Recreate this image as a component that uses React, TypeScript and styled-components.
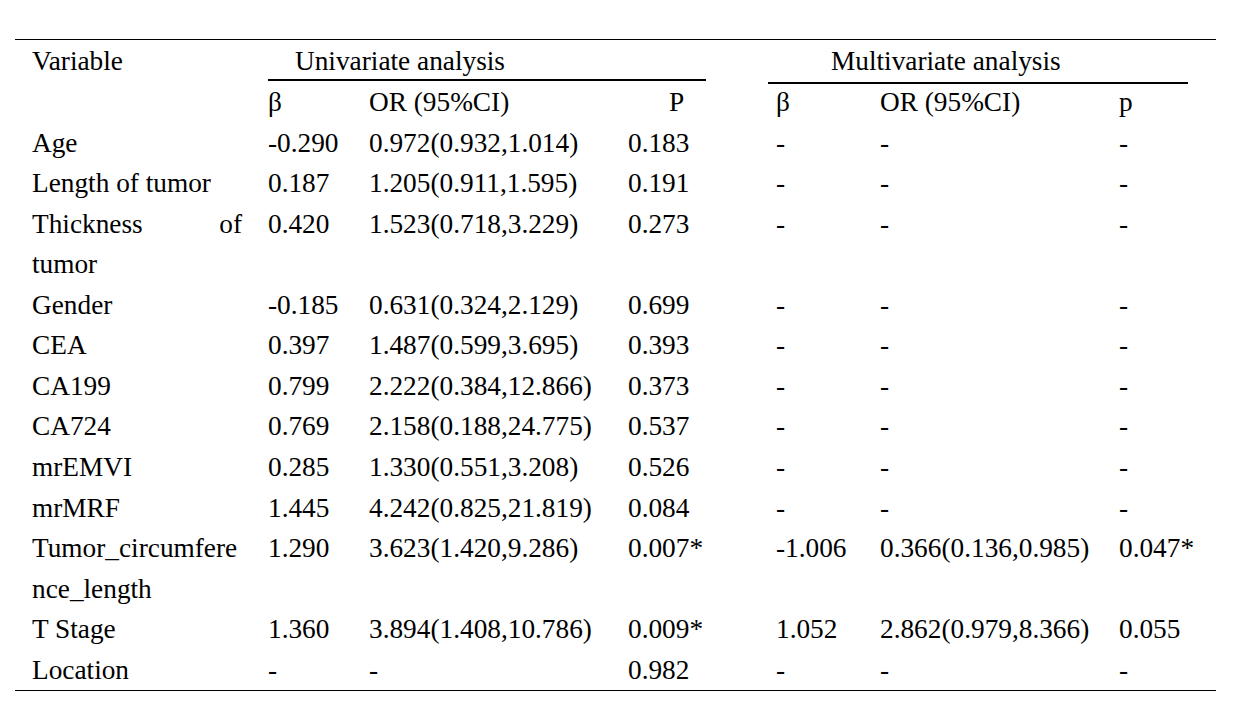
import React from "react";
import styled, { createGlobalStyle } from "styled-components";

const Global = createGlobalStyle`
  html, body { margin: 0; padding: 0; background: #ffffff; }
  body { font-family: "Liberation Serif", "Times New Roman", serif; color: #000; }
`;

const COLS = "253px 101px 259px 148px 104px 239px 97px";
const ROW_H = 40.54;

const Page = styled.div`
  padding-top: 39px;
  padding-left: 15px;
  width: 1201px;
`;

const Table = styled.div`
  border-top: 1px solid #000;
  border-bottom: 1px solid #000;
  font-size: 27.3px;
  color: #000;
`;

const HeaderRow = styled.div<{ $h: number }>`
  display: grid;
  grid-template-columns: ${COLS};
  height: ${(p) => p.$h}px;
  line-height: 42px;
  align-items: start;
`;

const HeadCell = styled.div<{ $pad?: number }>`
  padding-left: ${(p) => p.$pad ?? 0}px;
  white-space: nowrap;
`;

const GroupCell = styled.div<{
  $col: string;
  $ml: number;
  $mr: number;
  $pad: number;
  $h: number;
}>`
  grid-column: ${(p) => p.$col};
  margin-left: ${(p) => p.$ml}px;
  margin-right: ${(p) => p.$mr}px;
  padding-left: ${(p) => p.$pad}px;
  height: ${(p) => p.$h}px;
  border-bottom: 2px solid #000;
  white-space: nowrap;
`;

const DataRow = styled.div<{ $lines: number }>`
  display: grid;
  grid-template-columns: ${COLS};
  height: ${(p) => p.$lines * ROW_H}px;
  line-height: ${ROW_H}px;
  align-items: start;
`;

const VarCell = styled.div<{ $justify?: boolean }>`
  padding-left: 17px;
  width: 210px;
  text-align: ${(p) => (p.$justify ? "justify" : "left")};
  text-align-last: ${(p) => (p.$justify ? "justify" : "auto")};
`;

const Cell = styled.div`
  white-space: nowrap;
`;

type Row = {
  name: string[];
  justify?: boolean;
  vals: string[];
};

const rows: Row[] = [
  { name: ["Age"], vals: ["-0.290", "0.972(0.932,1.014)", "0.183", "-", "-", "-"] },
  { name: ["Length of tumor"], vals: ["0.187", "1.205(0.911,1.595)", "0.191", "-", "-", "-"] },
  {
    name: ["Thickness of", "tumor"],
    justify: true,
    vals: ["0.420", "1.523(0.718,3.229)", "0.273", "-", "-", "-"],
  },
  { name: ["Gender"], vals: ["-0.185", "0.631(0.324,2.129)", "0.699", "-", "-", "-"] },
  { name: ["CEA"], vals: ["0.397", "1.487(0.599,3.695)", "0.393", "-", "-", "-"] },
  { name: ["CA199"], vals: ["0.799", "2.222(0.384,12.866)", "0.373", "-", "-", "-"] },
  { name: ["CA724"], vals: ["0.769", "2.158(0.188,24.775)", "0.537", "-", "-", "-"] },
  { name: ["mrEMVI"], vals: ["0.285", "1.330(0.551,3.208)", "0.526", "-", "-", "-"] },
  { name: ["mrMRF"], vals: ["1.445", "4.242(0.825,21.819)", "0.084", "-", "-", "-"] },
  {
    name: ["Tumor_circumfere", "nce_length"],
    vals: ["1.290", "3.623(1.420,9.286)", "0.007*", "-1.006", "0.366(0.136,0.985)", "0.047*"],
  },
  {
    name: ["T Stage"],
    vals: ["1.360", "3.894(1.408,10.786)", "0.009*", "1.052", "2.862(0.979,8.366)", "0.055"],
  },
  { name: ["Location"], vals: ["-", "-", "0.982", "-", "-", "-"] },
];

export default function App() {
  return (
    <>
      <Global />
      <Page>
        <Table>
          <HeaderRow $h={41}>
            <HeadCell $pad={17}>Variable</HeadCell>
            <GroupCell $col="2 / 5" $ml={0} $mr={70} $pad={27} $h={39}>
              Univariate analysis
            </GroupCell>
            <GroupCell $col="5 / 8" $ml={-8} $mr={28} $pad={63} $h={42}>
              Multivariate analysis
            </GroupCell>
          </HeaderRow>
          <HeaderRow $h={41.75}>
            <HeadCell />
            <HeadCell>β</HeadCell>
            <HeadCell>OR (95%CI)</HeadCell>
            <HeadCell $pad={41}>P</HeadCell>
            <HeadCell>β</HeadCell>
            <HeadCell>OR (95%CI)</HeadCell>
            <HeadCell>p</HeadCell>
          </HeaderRow>
          {rows.map((r) => (
            <DataRow key={r.name.join(" ")} $lines={r.name.length}>
              <VarCell $justify={r.justify}>
                {r.name.map((line, i) => (
                  <React.Fragment key={i}>
                    {i > 0 && <br />}
                    {line}
                  </React.Fragment>
                ))}
              </VarCell>
              {r.vals.map((v, i) => (
                <Cell key={i}>{v}</Cell>
              ))}
            </DataRow>
          ))}
        </Table>
      </Page>
    </>
  );
}
